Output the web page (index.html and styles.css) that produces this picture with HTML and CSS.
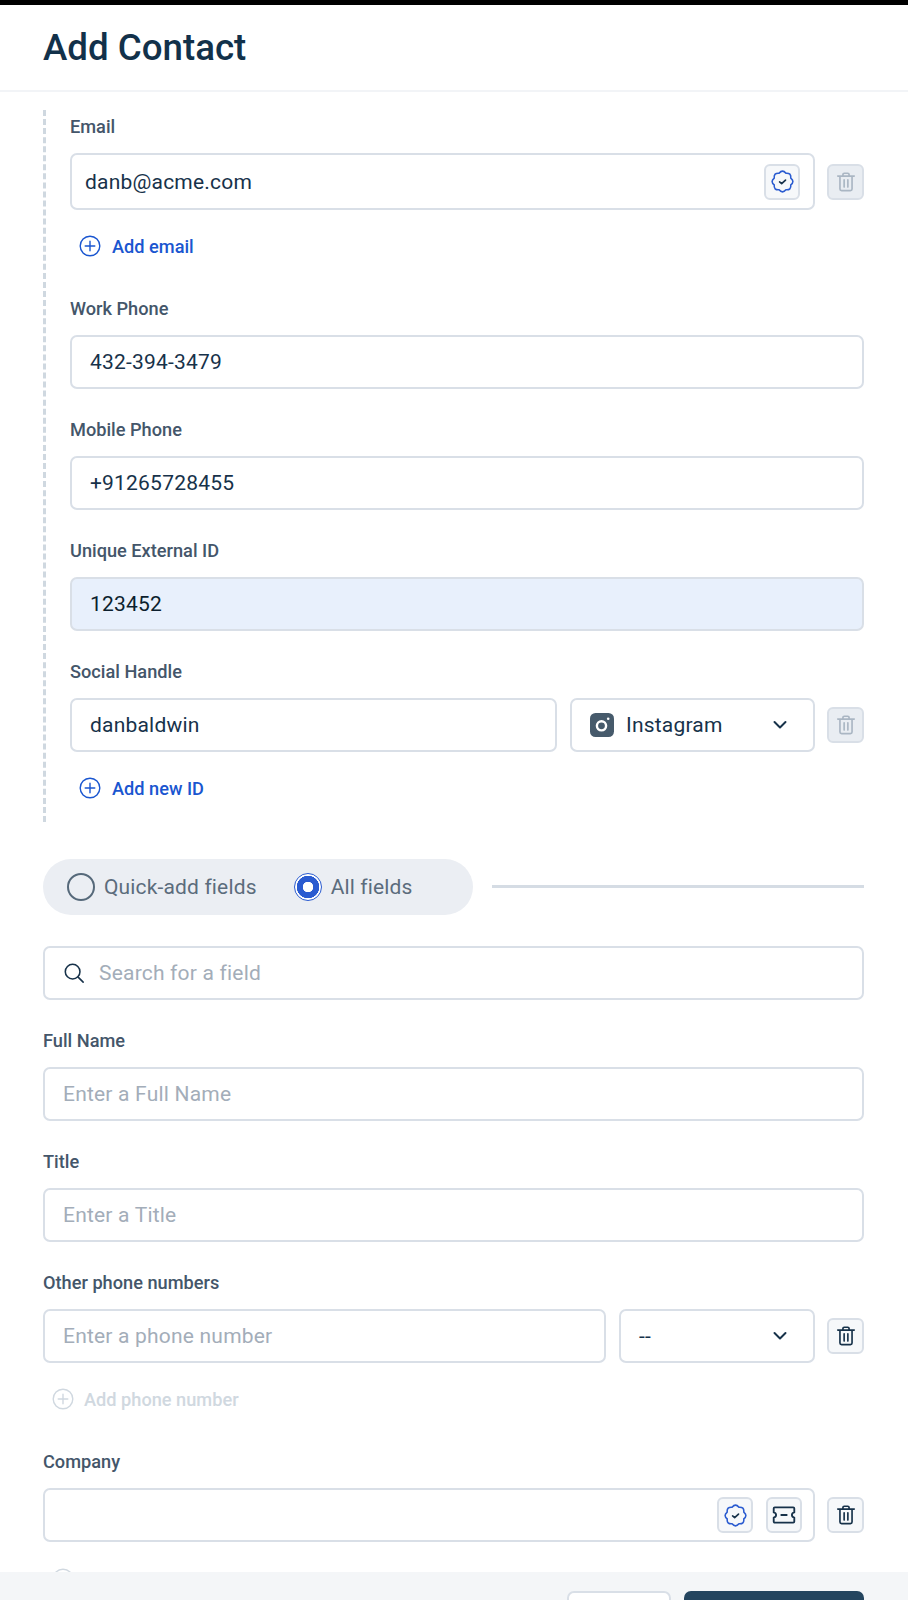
FILE: index.html
```html
<!DOCTYPE html>
<html lang="en">
<head>
    <meta charset="UTF-8">
    <meta name="viewport" content="width=device-width, initial-scale=1.0">
    <title>Add Contact</title>
    <link rel="stylesheet" href="styles.css">
</head>
<body>

<svg class="icon-defs" width="0" height="0" aria-hidden="true">
    <symbol id="i-plus" viewBox="0 0 22 22">
        <circle cx="11" cy="11" r="9.8" fill="none" stroke="currentColor" stroke-width="1.4"/>
        <path d="M11 6.2v9.6M6.2 11h9.6" fill="none" stroke="currentColor" stroke-width="1.4" stroke-linecap="round"/>
    </symbol>
    <symbol id="i-trash" viewBox="0 0 20 20">
        <path d="M2.5 4.6h15M7.2 4.4V3.2c0-.7.5-1.2 1.2-1.2h3.2c.7 0 1.2.5 1.2 1.2v1.2M4.5 4.8v11.6c0 .9.6 1.5 1.5 1.5h8c.9 0 1.5-.6 1.5-1.5V4.8M8.3 8v6.6M11.7 8v6.6" fill="none" stroke="currentColor" stroke-width="1.5" stroke-linecap="round" stroke-linejoin="round"/>
    </symbol>
    <symbol id="i-badge" viewBox="0 0 24 24">
        <path d="M19.95 8.71Q24 12 19.95 15.29Q20.49 20.49 15.29 19.95Q12 24 8.71 19.95Q3.51 20.49 4.05 15.29Q0 12 4.05 8.71Q3.51 3.51 8.71 4.05Q12 0 15.29 4.05Q20.49 3.51 19.95 8.71z" fill="none" stroke="currentColor" stroke-width="1.5" stroke-linejoin="round"/>
        <path d="M9.2 12.4l2 1.7 3.7-3.5" fill="none" stroke="#17324a" stroke-width="1.6" stroke-linecap="round" stroke-linejoin="round"/>
    </symbol>
    <symbol id="i-ticket" viewBox="0 0 24 24">
        <path d="M3.5 5h17c.6 0 1 .4 1 1v3.6c-1.3.3-2.2 1.2-2.2 2.4s.9 2.1 2.2 2.4V18c0 .6-.4 1-1 1h-17c-.6 0-1-.4-1-1v-3.6c1.3-.3 2.2-1.2 2.2-2.4s-.9-2.1-2.2-2.4V6c0-.6.4-1 1-1zM9.5 12h5" fill="none" stroke="currentColor" stroke-width="1.7" stroke-linecap="round" stroke-linejoin="round"/>
    </symbol>
    <symbol id="i-chevron" viewBox="0 0 14 10">
        <path d="M1.5 2l5.5 5.5L12.5 2" fill="none" stroke="currentColor" stroke-width="2" stroke-linecap="round" stroke-linejoin="round"/>
    </symbol>
</svg>

<div class="topbar"></div>

<header class="header">
    <h1>Add Contact</h1>
</header>

<main class="content">
    <!-- Identifiers -->
    <section class="identifiers">
        <div class="field has-link">
            <label>Email</label>
            <div class="row">
                <div class="input tall grow">
                    <span class="value">danb@acme.com</span>
                    <button class="icon-btn verify"><svg><use href="#i-badge"/></svg></button>
                </div>
                <button class="icon-btn side disabled"><svg><use href="#i-trash"/></svg></button>
            </div>
            <a class="add-link"><svg><use href="#i-plus"/></svg>Add email</a>
        </div>

        <div class="field">
            <label>Work Phone</label>
            <div class="input"><span class="value">432-394-3479</span></div>
        </div>

        <div class="field">
            <label>Mobile Phone</label>
            <div class="input"><span class="value">+91265728455</span></div>
        </div>

        <div class="field">
            <label>Unique External ID</label>
            <div class="input filled"><span class="value">123452</span></div>
        </div>

        <div class="field last">
            <label>Social Handle</label>
            <div class="row">
                <div class="input grow"><span class="value">danbaldwin</span></div>
                <div class="input select select-social">
                    <svg class="insta" viewBox="0 0 24 24">
                        <rect width="24" height="24" rx="5.5" fill="#465a6b"/>
                        <circle cx="11.5" cy="12.8" r="4.6" fill="none" stroke="#fff" stroke-width="2.4"/>
                        <circle cx="18.2" cy="5.8" r="1.3" fill="#fff"/>
                    </svg>
                    <span class="value">Instagram</span>
                    <svg class="chevron"><use href="#i-chevron"/></svg>
                </div>
                <button class="icon-btn side disabled"><svg><use href="#i-trash"/></svg></button>
            </div>
            <a class="add-link"><svg><use href="#i-plus"/></svg>Add new ID</a>
        </div>
    </section>

    <!-- Field set switch -->
    <div class="switch-row">
        <div class="switch">
            <span class="radio-item"><span class="radio"></span>Quick-add fields</span>
            <span class="radio-item"><span class="radio checked"></span>All fields</span>
        </div>
        <div class="switch-line"></div>
    </div>

    <div class="input search">
        <svg class="search-icon" viewBox="0 0 24 24">
            <circle cx="10.5" cy="10.5" r="8" fill="none" stroke="currentColor" stroke-width="1.7"/>
            <path d="M16.5 16.5l5.5 5.5" fill="none" stroke="currentColor" stroke-width="1.7" stroke-linecap="round"/>
        </svg>
        <span class="placeholder">Search for a field</span>
    </div>

    <div class="field">
        <label>Full Name</label>
        <div class="input"><span class="placeholder">Enter a Full Name</span></div>
    </div>

    <div class="field">
        <label>Title</label>
        <div class="input"><span class="placeholder">Enter a Title</span></div>
    </div>

    <div class="field has-link">
        <label>Other phone numbers</label>
        <div class="row">
            <div class="input grow"><span class="placeholder">Enter a phone number</span></div>
            <div class="input select select-type">
                <span class="value">--</span>
                <svg class="chevron"><use href="#i-chevron"/></svg>
            </div>
            <button class="icon-btn side"><svg><use href="#i-trash"/></svg></button>
        </div>
        <a class="add-link muted"><svg><use href="#i-plus"/></svg>Add phone number</a>
    </div>

    <div class="field has-link company">
        <label>Company</label>
        <div class="row">
            <div class="input grow">
                <span class="value"></span>
                <button class="icon-btn verify"><svg><use href="#i-badge"/></svg></button>
                <button class="icon-btn ticket"><svg><use href="#i-ticket"/></svg></button>
            </div>
            <button class="icon-btn side"><svg><use href="#i-trash"/></svg></button>
        </div>
        <a class="add-link muted"><svg><use href="#i-plus"/></svg>Associate another</a>
    </div>
</main>

<footer class="footer">
    <button class="btn btn-cancel" aria-label="Cancel"></button>
    <button class="btn btn-save" aria-label="Save"></button>
</footer>

</body>
</html>
```

FILE: styles.css
```css
* {
    box-sizing: border-box;
}
body {
    font-family: 'Roboto', sans-serif;
    background-color: white;
    color: #17324a;
    display: flex;
    flex-direction: column;
    height: 100vh;
    margin: 0;
    overflow: hidden;
}
.icon-defs {
    position: absolute;
}
.topbar {
    height: 5px;
    flex: none;
    background-color: black;
}
.header {
    height: 87px;
    flex: none;
    display: flex;
    align-items: center;
    padding: 0 43px;
    border-bottom: 2px solid #f2f4f7;
}
h1 {
    margin: 0;
    font-size: 36.7px;
    font-weight: 500;
    color: #12314a;
}
.content {
    flex: 1;
    min-height: 0;
    overflow: hidden;
    padding: 18px 44px 0 43px;
}
.identifiers {
    border-left: 3px dashed #cfd8e0;
    padding: 7px 0 23px 24px;
    margin-bottom: 37px;
}
.field {
    margin-bottom: 31px;
}
.field.has-link {
    margin-bottom: 42px;
}
.field.last {
    margin-bottom: 0;
}
.field label {
    display: block;
    height: 20px;
    line-height: 20px;
    margin-bottom: 16px;
    font-size: 18.2px;
    font-weight: 500;
    color: #44566a;
}
.row {
    display: flex;
    align-items: center;
    gap: 12px;
}
.input {
    height: 54px;
    display: flex;
    align-items: center;
    padding: 0 18px;
    border: 2px solid #d9dfe7;
    border-radius: 7px;
    background-color: white;
    font-size: 21px;
    letter-spacing: 0.2px;
}
.input.tall {
    height: 57px;
    padding: 0 13px;
}
.grow {
    flex: 1;
    min-width: 0;
}
.filled {
    background-color: #e8f0fc;
}
.value {
    flex: 1;
    color: #17324a;
}
.filled .value {
    color: #0c1f2e;
}
.placeholder {
    color: #a3adb9;
}
.select {
    margin-left: 1px;
}
.select-social {
    width: 245px;
    flex: none;
}
.select-type {
    width: 196px;
    flex: none;
}
.insta {
    width: 24px;
    height: 24px;
    margin-right: 12px;
    flex: none;
}
.chevron {
    width: 14px;
    height: 10px;
    margin-right: 8px;
    color: #17324a;
    flex: none;
}
.icon-btn {
    width: 36px;
    height: 36px;
    flex: none;
    display: flex;
    align-items: center;
    justify-content: center;
    padding: 0;
    border: 2px solid #d9dfe7;
    border-radius: 6px;
    background-color: #f6f8fa;
    color: #17324a;
}
.icon-btn.side {
    width: 37px;
}
.icon-btn svg {
    width: 22px;
    height: 22px;
    flex: none;
}
.icon-btn.disabled {
    background-color: #e9edf2;
    color: #aab6c3;
}
.icon-btn.verify {
    color: #2a5bd0;
}
.icon-btn.verify svg {
    width: 25px;
    height: 25px;
}
.icon-btn.ticket svg {
    width: 26px;
    height: 26px;
}
.input .ticket {
    margin-left: 13px;
    margin-right: -7px;
}
.add-link {
    display: flex;
    align-items: center;
    gap: 11px;
    height: 22px;
    margin: 25px 0 0 9px;
    font-size: 18.2px;
    font-weight: 500;
    color: #1a56d0;
}
.add-link svg {
    width: 22px;
    height: 22px;
}
.add-link.muted {
    gap: 10px;
    color: #d0d8e0;
}
.company .add-link {
    margin-top: 26px;
}
.switch-row {
    display: flex;
    align-items: center;
    gap: 19px;
    margin-bottom: 31px;
}
.switch {
    display: flex;
    align-items: center;
    gap: 37px;
    width: 430px;
    height: 56px;
    padding: 0 24px;
    border-radius: 28px;
    background-color: #ebeef3;
}
.radio-item {
    display: flex;
    align-items: center;
    gap: 9px;
    font-size: 21px;
    letter-spacing: 0.15px;
    color: #5b6c7c;
}
.radio {
    width: 28px;
    height: 28px;
    border: 2px solid #56697a;
    border-radius: 50%;
}
.radio.checked {
    border: 1px solid #2a5bd0;
    background: radial-gradient(circle, white 0 5px, #2a5bd0 5.5px 11px, white 11.5px);
}
.switch-line {
    flex: 1;
    height: 3px;
    margin-bottom: 2px;
    background-color: #d5dce4;
}
.search {
    margin-bottom: 31px;
}
.search-icon {
    width: 22px;
    height: 22px;
    margin-right: 14px;
    color: #17324a;
}
.footer {
    height: 28px;
    flex: none;
    display: flex;
    justify-content: flex-end;
    align-items: flex-start;
    gap: 13px;
    padding: 19px 44px 0 0;
    overflow: hidden;
    background-color: #f4f6f8;
}
.btn {
    height: 44px;
    flex: none;
    border-radius: 7px;
}
.btn-cancel {
    width: 104px;
    border: 2px solid #d9dfe7;
    background-color: white;
}
.btn-save {
    width: 180px;
    border: none;
    background-color: #24455f;
}
```
